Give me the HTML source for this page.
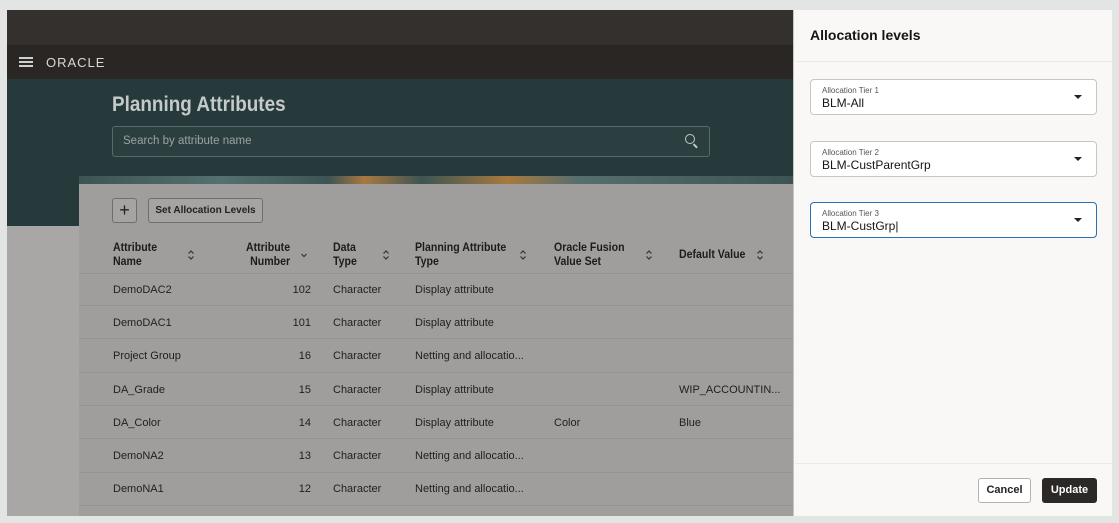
<!DOCTYPE html>
<html><head><meta charset="utf-8"><style>
*{box-sizing:border-box;margin:0;padding:0}
body{width:1119px;height:523px;background:#e3e5e4;font-family:"Liberation Sans",sans-serif;position:relative;overflow:hidden}
.abs{position:absolute}
.t{font-size:11px;color:#1f1f1f;white-space:nowrap}
.h{font-size:11.5px;color:#1c1c1c;font-weight:bold;line-height:14px;position:absolute;transform:scaleX(.92);transform-origin:left}
.sort{position:absolute;width:8px;height:12px}
.row{position:absolute;left:79px;width:714px;height:1px;background:#959492}
.field{position:absolute;left:810px;width:287px;height:36px;background:#fff;border:1px solid #c8c6c3;border-radius:4px}
.field .l{position:absolute;left:11px;top:6px;font-size:8px;color:#555}
.field .v{position:absolute;left:11px;top:16px;font-size:12px;color:#161513}
.field .a{position:absolute;right:14px;top:15px;width:0;height:0;border-left:4px solid transparent;border-right:4px solid transparent;border-top:4px solid #222}
</style></head><body>
<svg width="0" height="0" style="position:absolute"><defs><symbol id="s" viewBox="0 0 8 12"><path d="M1.5 4.5L4 2L6.5 4.5M1.5 7.5L4 10L6.5 7.5" fill="none" stroke="#333" stroke-width="1.2"/></symbol><symbol id="d" viewBox="0 0 8 12"><path d="M1.5 5L4 7.5L6.5 5" fill="none" stroke="#333" stroke-width="1.2"/></symbol></defs></svg>
<div class="abs" style="left:7px;top:10px;width:786px;height:35px;background:#33302d"></div>
<div class="abs" style="left:7px;top:45px;width:786px;height:34px;background:#2a2624"></div>
<div class="abs" style="left:19px;top:57px;width:14px;height:2px;background:#cfcfcf;box-shadow:0 4px 0 #cfcfcf,0 8px 0 #cfcfcf"></div>
<div class="abs" style="left:46px;top:55px;font-size:13px;color:#d8d8d8;letter-spacing:1px">ORACLE</div>
<div class="abs" style="left:7px;top:79px;width:786px;height:147px;background:#26393b"></div>
<div class="abs" style="left:7px;top:226px;width:72px;height:290px;background:#a8a7a5"></div>
<div class="abs" style="left:112px;top:93px;font-size:21px;font-weight:bold;color:#c4c9c9;transform:scaleX(.9);transform-origin:left">Planning Attributes</div>
<div class="abs" style="left:112px;top:126px;width:598px;height:31px;border:1px solid #5a6a6b;border-radius:3px;background:#2b3e40"></div>
<div class="abs" style="left:123px;top:135px;font-size:11.5px;color:#9aa3a3">Search by attribute name</div>
<div class="abs" style="left:685px;top:134px;width:10px;height:10px;border:1.5px solid #c5cbcb;border-radius:50%"></div>
<div class="abs" style="left:693px;top:145px;width:5px;height:1.5px;background:#c5cbcb;transform:rotate(45deg)"></div>
<div class="abs" style="left:79px;top:176px;width:714px;height:8px;background:linear-gradient(90deg,#3d5454 0,#557070 20%,#3d5454 35%,#a8793f 40%,#3d5454 48%,#a8793f 60%,#556e6e 70%,#3d5454 100%)"></div>
<div class="abs" style="left:79px;top:184px;width:714px;height:332px;background:#9f9e9c"></div>
<div class="abs" style="left:112px;top:198px;width:25px;height:25px;border:1px solid #6f6e6c;border-radius:3px;background:#a5a4a2;font-size:18px;text-align:center;line-height:22px;color:#222">+</div>
<div class="abs" style="left:148px;top:198px;width:115px;height:25px;border:1px solid #6f6e6c;border-radius:3px;background:#a5a4a2;font-size:10px;font-weight:bold;text-align:center;line-height:23px;color:#222">Set Allocation Levels</div>
<div class="h" style="left:113px;top:241px">Attribute<br>Name</div><svg class="sort" style="left:187px;top:249px"><use href="#s"/></svg>
<div class="h" style="left:246px;top:241px;text-align:right">Attribute<br>&nbsp;Number</div><svg class="sort" style="left:300px;top:249px"><use href="#d"/></svg>
<div class="h" style="left:333px;top:241px">Data<br>Type</div><svg class="sort" style="left:382px;top:249px"><use href="#s"/></svg>
<div class="h" style="left:415px;top:241px">Planning Attribute<br>Type</div><svg class="sort" style="left:519px;top:249px"><use href="#s"/></svg>
<div class="h" style="left:554px;top:241px">Oracle Fusion<br>Value Set</div><svg class="sort" style="left:645px;top:249px"><use href="#s"/></svg>
<div class="h" style="left:679px;top:248px">Default Value</div><svg class="sort" style="left:756px;top:249px"><use href="#s"/></svg>
<div class="row" style="top:273px"></div>
<div class="row" style="top:305px"></div><div class="row" style="top:338px"></div><div class="row" style="top:372px"></div><div class="row" style="top:405px"></div><div class="row" style="top:438px"></div><div class="row" style="top:472px"></div><div class="row" style="top:505px"></div>
<div class="abs t" style="left:113px;top:284px">DemoDAC2</div><div class="abs t" style="left:285px;top:284px;width:26px;text-align:right">102</div><div class="abs t" style="left:333px;top:284px">Character</div><div class="abs t" style="left:415px;top:284px">Display attribute</div>
<div class="abs t" style="left:113px;top:317px">DemoDAC1</div><div class="abs t" style="left:285px;top:317px;width:26px;text-align:right">101</div><div class="abs t" style="left:333px;top:317px">Character</div><div class="abs t" style="left:415px;top:317px">Display attribute</div>
<div class="abs t" style="left:113px;top:350px">Project Group</div><div class="abs t" style="left:285px;top:350px;width:26px;text-align:right">16</div><div class="abs t" style="left:333px;top:350px">Character</div><div class="abs t" style="left:415px;top:350px">Netting and allocatio...</div>
<div class="abs t" style="left:113px;top:384px">DA_Grade</div><div class="abs t" style="left:285px;top:384px;width:26px;text-align:right">15</div><div class="abs t" style="left:333px;top:384px">Character</div><div class="abs t" style="left:415px;top:384px">Display attribute</div><div class="abs t" style="left:679px;top:384px">WIP_ACCOUNTIN...</div>
<div class="abs t" style="left:113px;top:417px">DA_Color</div><div class="abs t" style="left:285px;top:417px;width:26px;text-align:right">14</div><div class="abs t" style="left:333px;top:417px">Character</div><div class="abs t" style="left:415px;top:417px">Display attribute</div><div class="abs t" style="left:554px;top:417px">Color</div><div class="abs t" style="left:679px;top:417px">Blue</div>
<div class="abs t" style="left:113px;top:450px">DemoNA2</div><div class="abs t" style="left:285px;top:450px;width:26px;text-align:right">13</div><div class="abs t" style="left:333px;top:450px">Character</div><div class="abs t" style="left:415px;top:450px">Netting and allocatio...</div>
<div class="abs t" style="left:113px;top:483px">DemoNA1</div><div class="abs t" style="left:285px;top:483px;width:26px;text-align:right">12</div><div class="abs t" style="left:333px;top:483px">Character</div><div class="abs t" style="left:415px;top:483px">Netting and allocatio...</div>
<div class="abs" style="left:793px;top:10px;width:319px;height:506px;background:#f9f8f6"></div>
<div class="abs" style="left:793px;top:10px;width:1px;height:506px;background:#c9c6c2"></div>
<div class="abs" style="left:810px;top:27px;font-size:14px;font-weight:bold;color:#161513">Allocation levels</div>
<div class="abs" style="left:795px;top:61px;width:317px;height:1px;background:#eceae6"></div>
<div class="field" style="top:79px"><div class="l">Allocation Tier 1</div><div class="v">BLM-All</div><div class="a"></div></div>
<div class="field" style="top:141px"><div class="l">Allocation Tier 2</div><div class="v">BLM-CustParentGrp</div><div class="a"></div></div>
<div class="field" style="top:202px;border:1.5px solid #2a6fb0"><div class="l">Allocation Tier 3</div><div class="v">BLM-CustGrp|</div><div class="a"></div></div>
<div class="abs" style="left:795px;top:463px;width:317px;height:1px;background:#eceae6"></div>
<div class="abs" style="left:978px;top:478px;width:53px;height:25px;border:1px solid #b5b2ae;border-radius:3px;background:#fff;font-size:11px;font-weight:bold;text-align:center;line-height:23px;color:#222">Cancel</div>
<div class="abs" style="left:1042px;top:478px;width:55px;height:25px;border-radius:3px;background:#2b2826;font-size:11px;font-weight:bold;text-align:center;line-height:25px;color:#fff">Update</div>
</body></html>
